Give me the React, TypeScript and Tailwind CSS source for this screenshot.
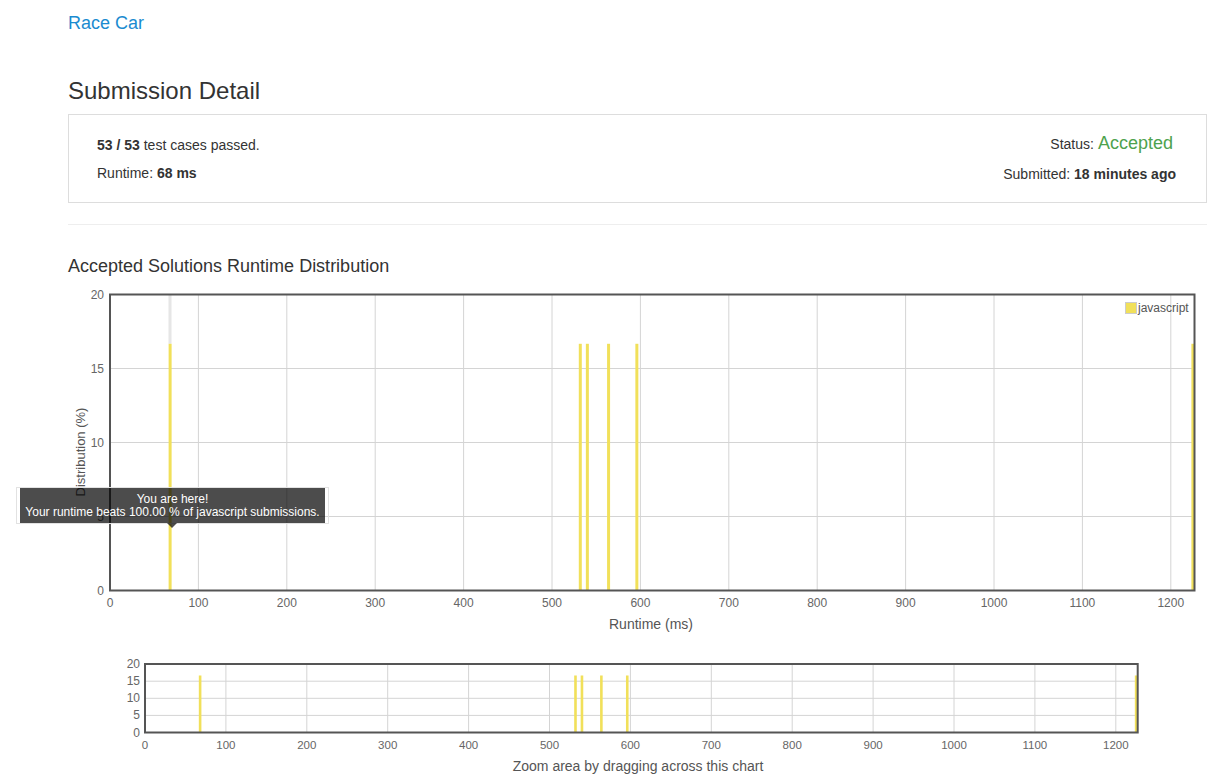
import React from 'react'

const JS = '#f1e05a'
const runtimes = [68, 532, 540, 564, 596, 1225]

// main chart scale
const mx = (v: number) => 110 + v * 0.884
const my = (p: number) => 590.5 - p * 14.8
// zoom chart scale
const zx = (v: number) => 145 + v * 0.809
const zy = (p: number) => 732.5 - p * 3.42

const ticks = [0, 100, 200, 300, 400, 500, 600, 700, 800, 900, 1000, 1100, 1200]

function MainChart() {
  return (
    <div className="relative h-[350px]">
      <svg width={1139} height={350} viewBox="68 285 1139 350" className="block overflow-visible">
        <rect x={110} y={294.5} width={1084.5} height={296} fill="#fff" />
        {ticks.slice(1).map((t) => (
          <line key={t} x1={mx(t)} x2={mx(t)} y1={294.5} y2={590.5} stroke="#d4d4d4" strokeWidth={1} />
        ))}
        {[5, 10, 15].map((p) => (
          <line key={p} x1={110} x2={1194.5} y1={my(p)} y2={my(p)} stroke="#d4d4d4" strokeWidth={1} />
        ))}
        <rect x={168.5} y={294.5} width={3} height={my(16.67) - 294.5} fill="#e6e6e6" />
        {runtimes.map((r) => (
          <rect key={r} x={mx(r) - 1.5} y={my(16.67)} width={3} height={590.5 - my(16.67)} fill={JS} />
        ))}
        <rect x={110} y={294.5} width={1084.5} height={296} fill="none" stroke="#555" strokeWidth={2} />
        {[0, 5, 10, 15, 20].map((p) => (
          <text key={p} x={104} y={my(p) + 4} textAnchor="end" fontSize={12} fill="#666" fontFamily="Liberation Sans, Arial, sans-serif">
            {p}
          </text>
        ))}
        {ticks.map((t) => (
          <text key={t} x={mx(t)} y={607} textAnchor="middle" fontSize={12} fill="#666" fontFamily="Liberation Sans, Arial, sans-serif">
            {t}
          </text>
        ))}
        <text x={651} y={629} textAnchor="middle" fontSize={14} fill="#555" fontFamily="Liberation Sans, Arial, sans-serif">
          Runtime (ms)
        </text>
        <text
          x={0}
          y={0}
          transform="translate(85 452) rotate(-90)"
          textAnchor="middle"
          fontSize={13}
          fill="#555"
          fontFamily="Liberation Sans, Arial, sans-serif"
        >
          Distribution (%)
        </text>
        <rect x={1125.5} y={302.5} width={11} height={11} fill={JS} stroke="#ccc" strokeWidth={1} />
        <text x={1138} y={312} fontSize={12} fill="#555" fontFamily="Liberation Sans, Arial, sans-serif">
          javascript
        </text>
      </svg>

      {/* tooltip */}
      <div className="absolute left-[-52px] top-[202px] border border-[#e2e2e2] px-[3px]">
        <div className="relative w-[305px] h-[35px] bg-black/70 text-white text-[12px] leading-[13px] text-center pt-[5px]">
          <div>You are here!</div>
          <div>Your runtime beats 100.00 % of javascript submissions.</div>
          <div className="absolute left-[147px] top-[35px] w-0 h-0 border-l-[5px] border-r-[5px] border-t-[5px] border-l-transparent border-r-transparent border-t-black/70" />
        </div>
      </div>
    </div>
  )
}

function ZoomChart() {
  return (
    <svg width={1139} height={130} viewBox="68 650 1139 130" className="block mt-[15px]">
      {ticks.slice(1).map((t) => (
        <line key={t} x1={zx(t)} x2={zx(t)} y1={664} y2={732.5} stroke="#d4d4d4" strokeWidth={1} />
      ))}
      {[5, 10, 15].map((p) => (
        <line key={p} x1={145} x2={1137.7} y1={zy(p)} y2={zy(p)} stroke="#d4d4d4" strokeWidth={1} />
      ))}
      {runtimes.map((r) => (
        <rect key={r} x={zx(r) - 1.2} y={zy(16.67)} width={2.6} height={732.5 - zy(16.67)} fill={JS} />
      ))}
      <rect x={145} y={664} width={992.7} height={68.5} fill="none" stroke="#555" strokeWidth={2} />
      {[0, 5, 10, 15, 20].map((p) => (
        <text key={p} x={140} y={zy(p) + 4} textAnchor="end" fontSize={12} fill="#666" fontFamily="Liberation Sans, Arial, sans-serif">
          {p}
        </text>
      ))}
      {ticks.map((t) => (
        <text key={t} x={zx(t)} y={749} textAnchor="middle" fontSize={11.5} fill="#666" fontFamily="Liberation Sans, Arial, sans-serif">
          {t}
        </text>
      ))}
      <text x={638} y={771} textAnchor="middle" fontSize={14} fill="#555" fontFamily="Liberation Sans, Arial, sans-serif">
        Zoom area by dragging across this chart
      </text>
    </svg>
  )
}

export default function App() {
  return (
    <div className="w-[1218px] h-[780px] overflow-hidden bg-white text-[#333]" style={{ fontFamily: '"Liberation Sans", Arial, sans-serif' }}>
      <div className="ml-[68px] w-[1139px]">
        <div className="pt-[11px]">
          <a className="text-[18px] leading-[24px] text-[#1a8bd0]">Race Car</a>
        </div>

        <h1 className="mt-[40px] text-[24px] leading-[30px] font-normal">Submission Detail</h1>

        <div className="mt-[8px] h-[89px] border border-[#ddd] pl-[28px] pr-[30px] pt-[20px] flex justify-between text-[14px]">
          <div>
            <div className="leading-[20px]">
              <b>53 / 53</b> test cases passed.
            </div>
            <div className="mt-[8px] leading-[20px]">
              Runtime: <b>68 ms</b>
            </div>
          </div>
          <div className="flex flex-col items-end -mt-[2px]">
            <div className="leading-[20px] flex items-baseline gap-[4px] pr-[3px]">
              <span>Status:</span>
              <span className="text-[18px] text-[#4ea24e]">Accepted</span>
            </div>
            <div className="mt-[10px] leading-[20px]">
              Submitted: <b>18 minutes ago</b>
            </div>
          </div>
        </div>

        <div className="mt-[21px] border-t border-[#eee]" />

        <h3 className="mt-[29px] text-[18px] leading-[24px] font-normal">Accepted Solutions Runtime Distribution</h3>

        <div className="mt-[7px]">
          <MainChart />
          <ZoomChart />
        </div>
      </div>
    </div>
  )
}
